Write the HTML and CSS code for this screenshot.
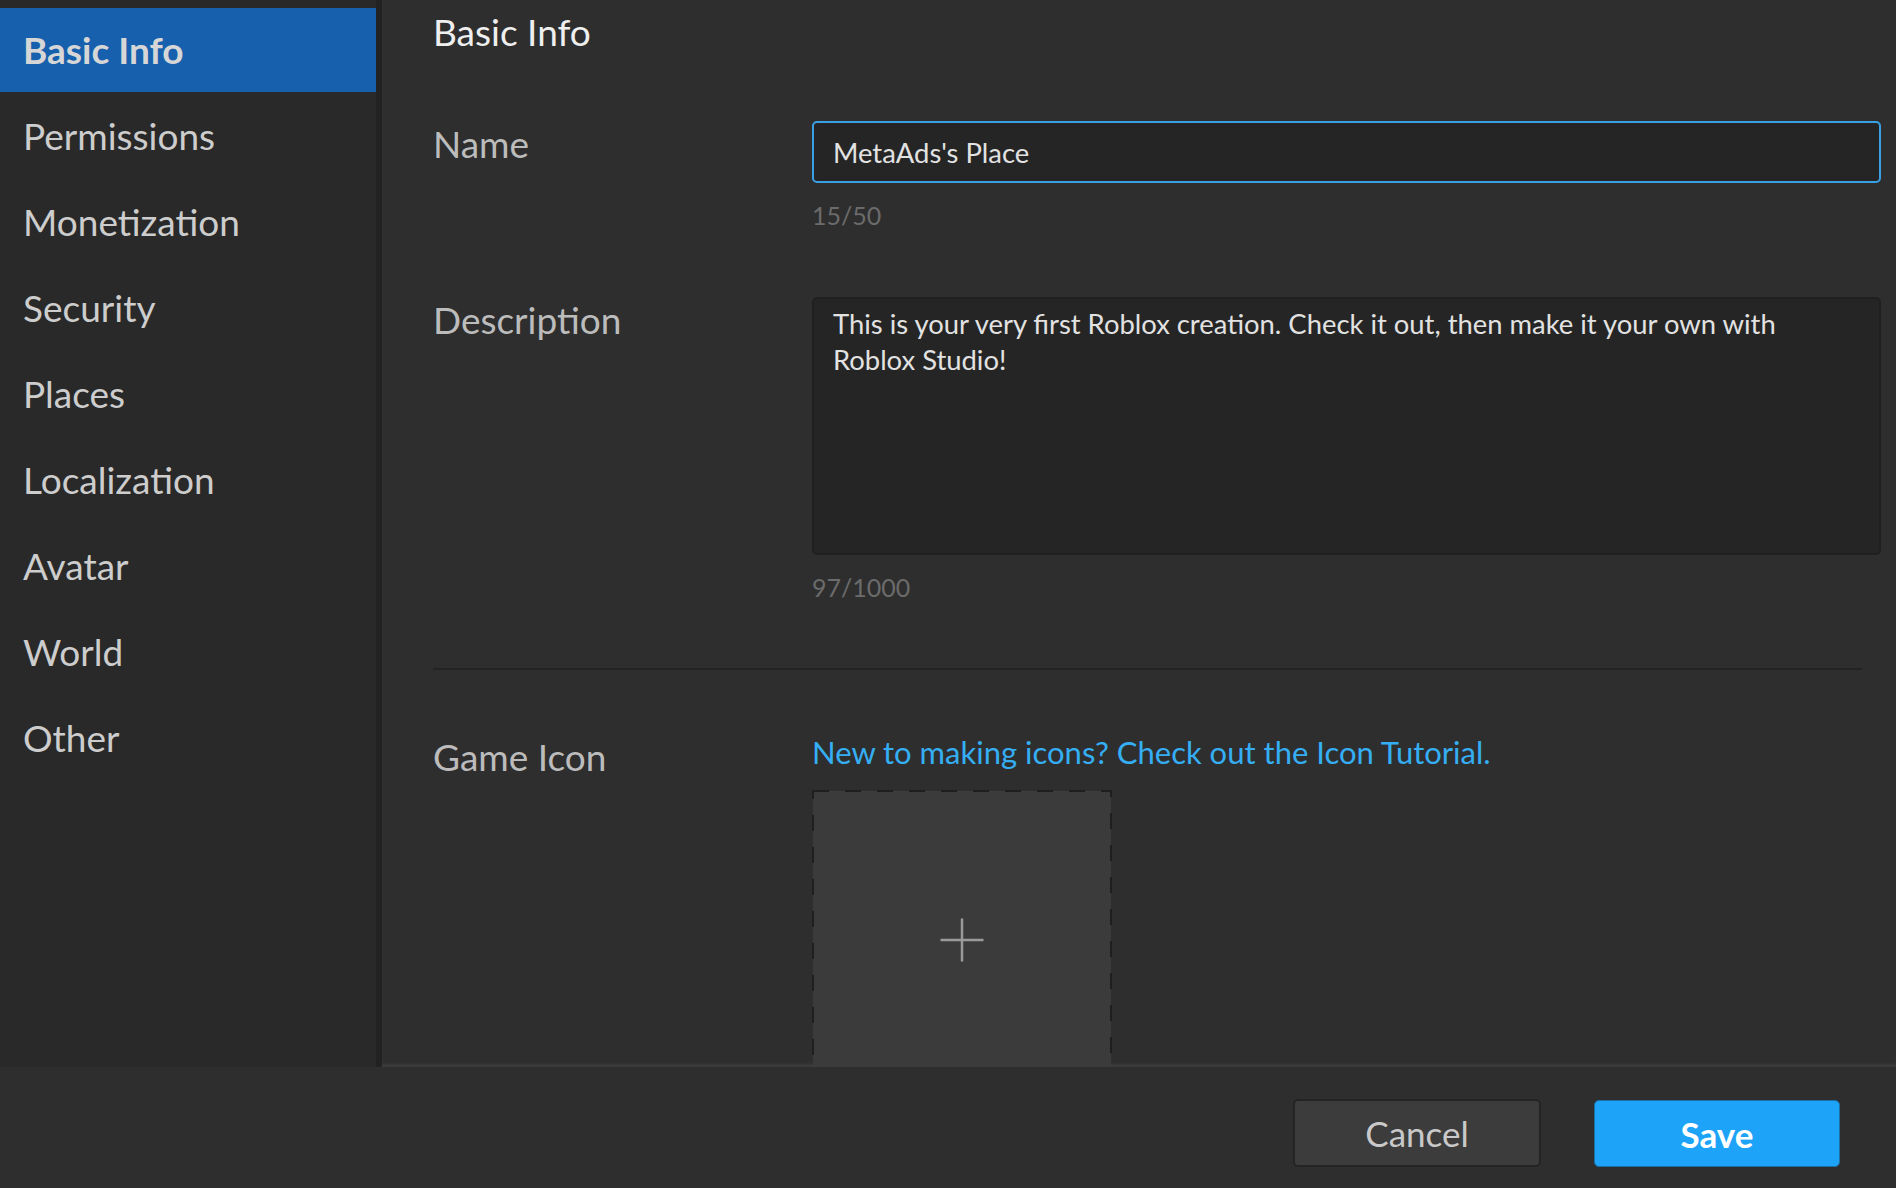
FILE: index.html
```html
<!DOCTYPE html>
<html lang="en">
<head>
<meta charset="utf-8">
<title>Game Settings - Basic Info</title>
<link rel="stylesheet" href="styles.css">
</head>
<body>
<div class="app">
  <div class="main">
    <nav class="sidebar">
      <div class="nav-item selected">Basic Info</div>
      <div class="nav-item">Permissions</div>
      <div class="nav-item">Monetization</div>
      <div class="nav-item">Security</div>
      <div class="nav-item">Places</div>
      <div class="nav-item">Localization</div>
      <div class="nav-item">Avatar</div>
      <div class="nav-item">World</div>
      <div class="nav-item">Other</div>
    </nav>
    <section class="content">
      <h1 class="title">Basic Info</h1>

      <div class="row row-name">
        <div class="label">Name</div>
        <div class="field">
          <div class="input">MetaAds's Place</div>
          <div class="counter">15/50</div>
        </div>
      </div>

      <div class="row row-desc">
        <div class="label">Description</div>
        <div class="field">
          <div class="textarea">This is your very first Roblox creation. Check it out, then make it your own with<br>Roblox Studio!</div>
          <div class="counter">97/1000</div>
        </div>
      </div>

      <div class="divider"></div>

      <div class="row row-icon">
        <div class="label label-icon">Game Icon</div>
        <div class="field">
          <div class="link">New to making icons? Check out the Icon Tutorial.</div>
          <div class="icon-box">
            <svg width="300" height="300" viewBox="0 0 300 300">
              <rect x="1" y="1" width="298" height="298" fill="#3b3b3b" stroke="#1f1f1f" stroke-width="2" stroke-dasharray="16 16"/>
              <line x1="128.5" y1="150" x2="171.5" y2="150" stroke="#9a9a9a" stroke-width="2.5"/>
              <line x1="150" y1="128.5" x2="150" y2="171.5" stroke="#9a9a9a" stroke-width="2.5"/>
            </svg>
          </div>
        </div>
      </div>
    </section>
  </div>
  <footer class="footer">
    <div class="btn btn-cancel">Cancel</div>
    <div class="btn btn-save">Save</div>
  </footer>
</div>
</body>
</html>
```
FILE: styles.css
```css
* {
  box-sizing: border-box;
}

html, body {
  margin: 0;
  padding: 0;
  background: #2e2e2e;
  font-family: "Lato", "Noto Sans", sans-serif;
}

.app {
  width: 1896px;
  height: 1188px;
  display: flex;
  flex-direction: column;
  overflow: hidden;
}

.main {
  height: 1067px;
  display: flex;
  flex: none;
}

.sidebar {
  width: 382px;
  flex: none;
  background: #292929;
  border-right: 6px solid #222222;
  padding-top: 8px;
}

.nav-item {
  height: 84px;
  margin-bottom: 2px;
  padding-left: 23px;
  font-size: 37px;
  line-height: 84px;
  color: #cdcdcd;
}

.nav-item.selected {
  background: #1660ad;
  font-weight: 700;
  color: #d6d6d6;
}

.content {
  flex: 1;
  background: #2e2e2e;
  padding: 9px 15px 0 51px;
  overflow: hidden;
  box-shadow: inset 0 -4px 3px -1px rgba(255, 255, 255, 0.07);
}

.title {
  margin: 0;
  font-size: 37px;
  font-weight: 400;
  line-height: 46px;
  color: #efefef;
}

.row {
  display: grid;
  grid-template-columns: 379px 1fr;
}

.row-name {
  margin-top: 66px;
}

.row-desc {
  margin-top: 67px;
}

.row-icon {
  margin-top: 64px;
}

.label {
  font-size: 37px;
  line-height: 46px;
  color: #bcbcbc;
}

.input {
  height: 62px;
  border: 2px solid #3aa0e4;
  border-radius: 5px;
  background: #252525;
  padding: 0 19px;
  font-size: 27.4px;
  line-height: 59px;
  color: #e2e2e2;
}

.textarea {
  height: 258px;
  border: 2px solid #202020;
  border-radius: 5px;
  background: #252525;
  padding: 7px 19px;
  font-size: 27.4px;
  line-height: 36px;
  color: #e2e2e2;
  white-space: nowrap;
}

.counter {
  margin-top: 17px;
  font-size: 25px;
  line-height: 30px;
  color: #6b6b6b;
}

.divider {
  margin-top: 66px;
  margin-right: 19px;
  height: 2px;
  background: #232323;
}

.link {
  font-size: 31px;
  line-height: 36px;
  color: #35aef4;
  margin-bottom: 20px;
}

.icon-box {
  width: 300px;
  height: 300px;
}

.icon-box svg {
  display: block;
}

.footer {
  height: 121px;
  flex: none;
  background: #2e2e2e;
  display: flex;
  justify-content: flex-end;
  align-items: flex-start;
  gap: 53px;
  padding: 32px 56px 0 0;
}

.btn {
  display: flex;
  align-items: center;
  justify-content: center;
  border-radius: 5px;
  font-size: 35px;
}

.btn-cancel {
  width: 248px;
  height: 68px;
  background: #3c3c3c;
  border: 2px solid #242424;
  color: #c9c9c9;
}

.btn-save {
  width: 246px;
  height: 67px;
  margin-top: 1px;
  background: #1da3f8;
  border: 1px solid #1a6fa6;
  color: #ffffff;
  font-weight: 700;
}
```
